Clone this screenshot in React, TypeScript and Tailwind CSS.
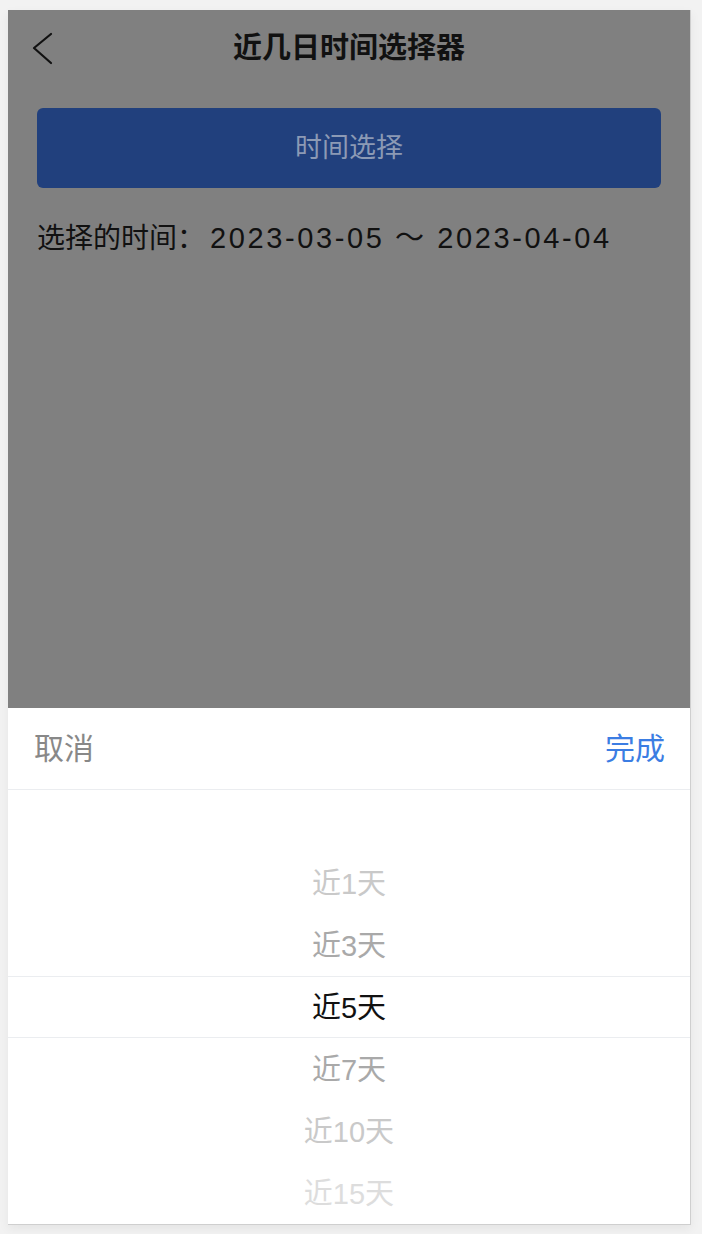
const options = ["近1天", "近3天", "近5天", "近7天", "近10天", "近15天"];
const selected = 2;

// text colour by distance from the selected row
const tone = ["text-[#111111]", "text-[#a9a9a9]", "text-[#c9c9c9]", "text-[#dddddd]"];

export default function App() {
  return (
    <div className="h-[1234px] w-full overflow-hidden bg-[#f2f2f2] pt-[10px] pl-[8px] font-['Liberation_Sans','Noto_Sans_CJK_SC',sans-serif]">
      <div className="flex h-[1215px] w-[683px] flex-col overflow-hidden border-r border-b border-[#cfcfcf] bg-[#808080] shadow-[0_4px_10px_rgba(0,0,0,0.06)]">
        {/* nav bar */}
        <div className="flex h-[78px] shrink-0 items-center pl-[24px] pr-[22px]">
          <svg width="22" height="34" viewBox="0 0 22 34" className="shrink-0">
            <path d="M19 2 L2 16 L19 31" fill="none" stroke="#111" strokeWidth="2.2" strokeLinecap="round" strokeLinejoin="round" />
          </svg>
          <div className="flex-1 pr-[24px] text-center text-[29px] font-bold text-[#111]">近几日时间选择器</div>
        </div>

        <div className="flex-1 px-[29px] pt-[20px]">
          <button className="flex h-[80px] w-full items-center justify-center rounded-[6px] bg-[#21407d] text-[27px] text-[#8c9ab5]">
            时间选择
          </button>
          <p className="mt-[30px] text-[28px] leading-[40px] text-[#111]">
            选择的时间：<span className="ml-[5px] text-[29px] tracking-[2.6px]">2023-03-05 ～ 2023-04-04</span>
          </p>
        </div>

        {/* bottom sheet */}
        <div className="h-[516px] shrink-0 bg-white">
          <div className="flex h-[82px] items-center justify-between border-b border-[#ebedf0] pl-[26px] pr-[25px] text-[30px]">
            <span className="text-[#888]">取消</span>
            <span className="text-[#3b7de3]">完成</span>
          </div>
          <div className="relative h-[434px] overflow-hidden">
            <div className="absolute inset-x-0 top-[186px] h-[62px] border-y border-[#ebedf0]" />
            <ul className="pt-[64px]">
              {options.map((o, i) => (
                <li
                  key={o}
                  className={`flex h-[62px] items-center justify-center text-[29px] ${tone[Math.min(Math.abs(i - selected), 3)]}`}
                >
                  {o}
                </li>
              ))}
            </ul>
          </div>
        </div>
      </div>
    </div>
  );
}
